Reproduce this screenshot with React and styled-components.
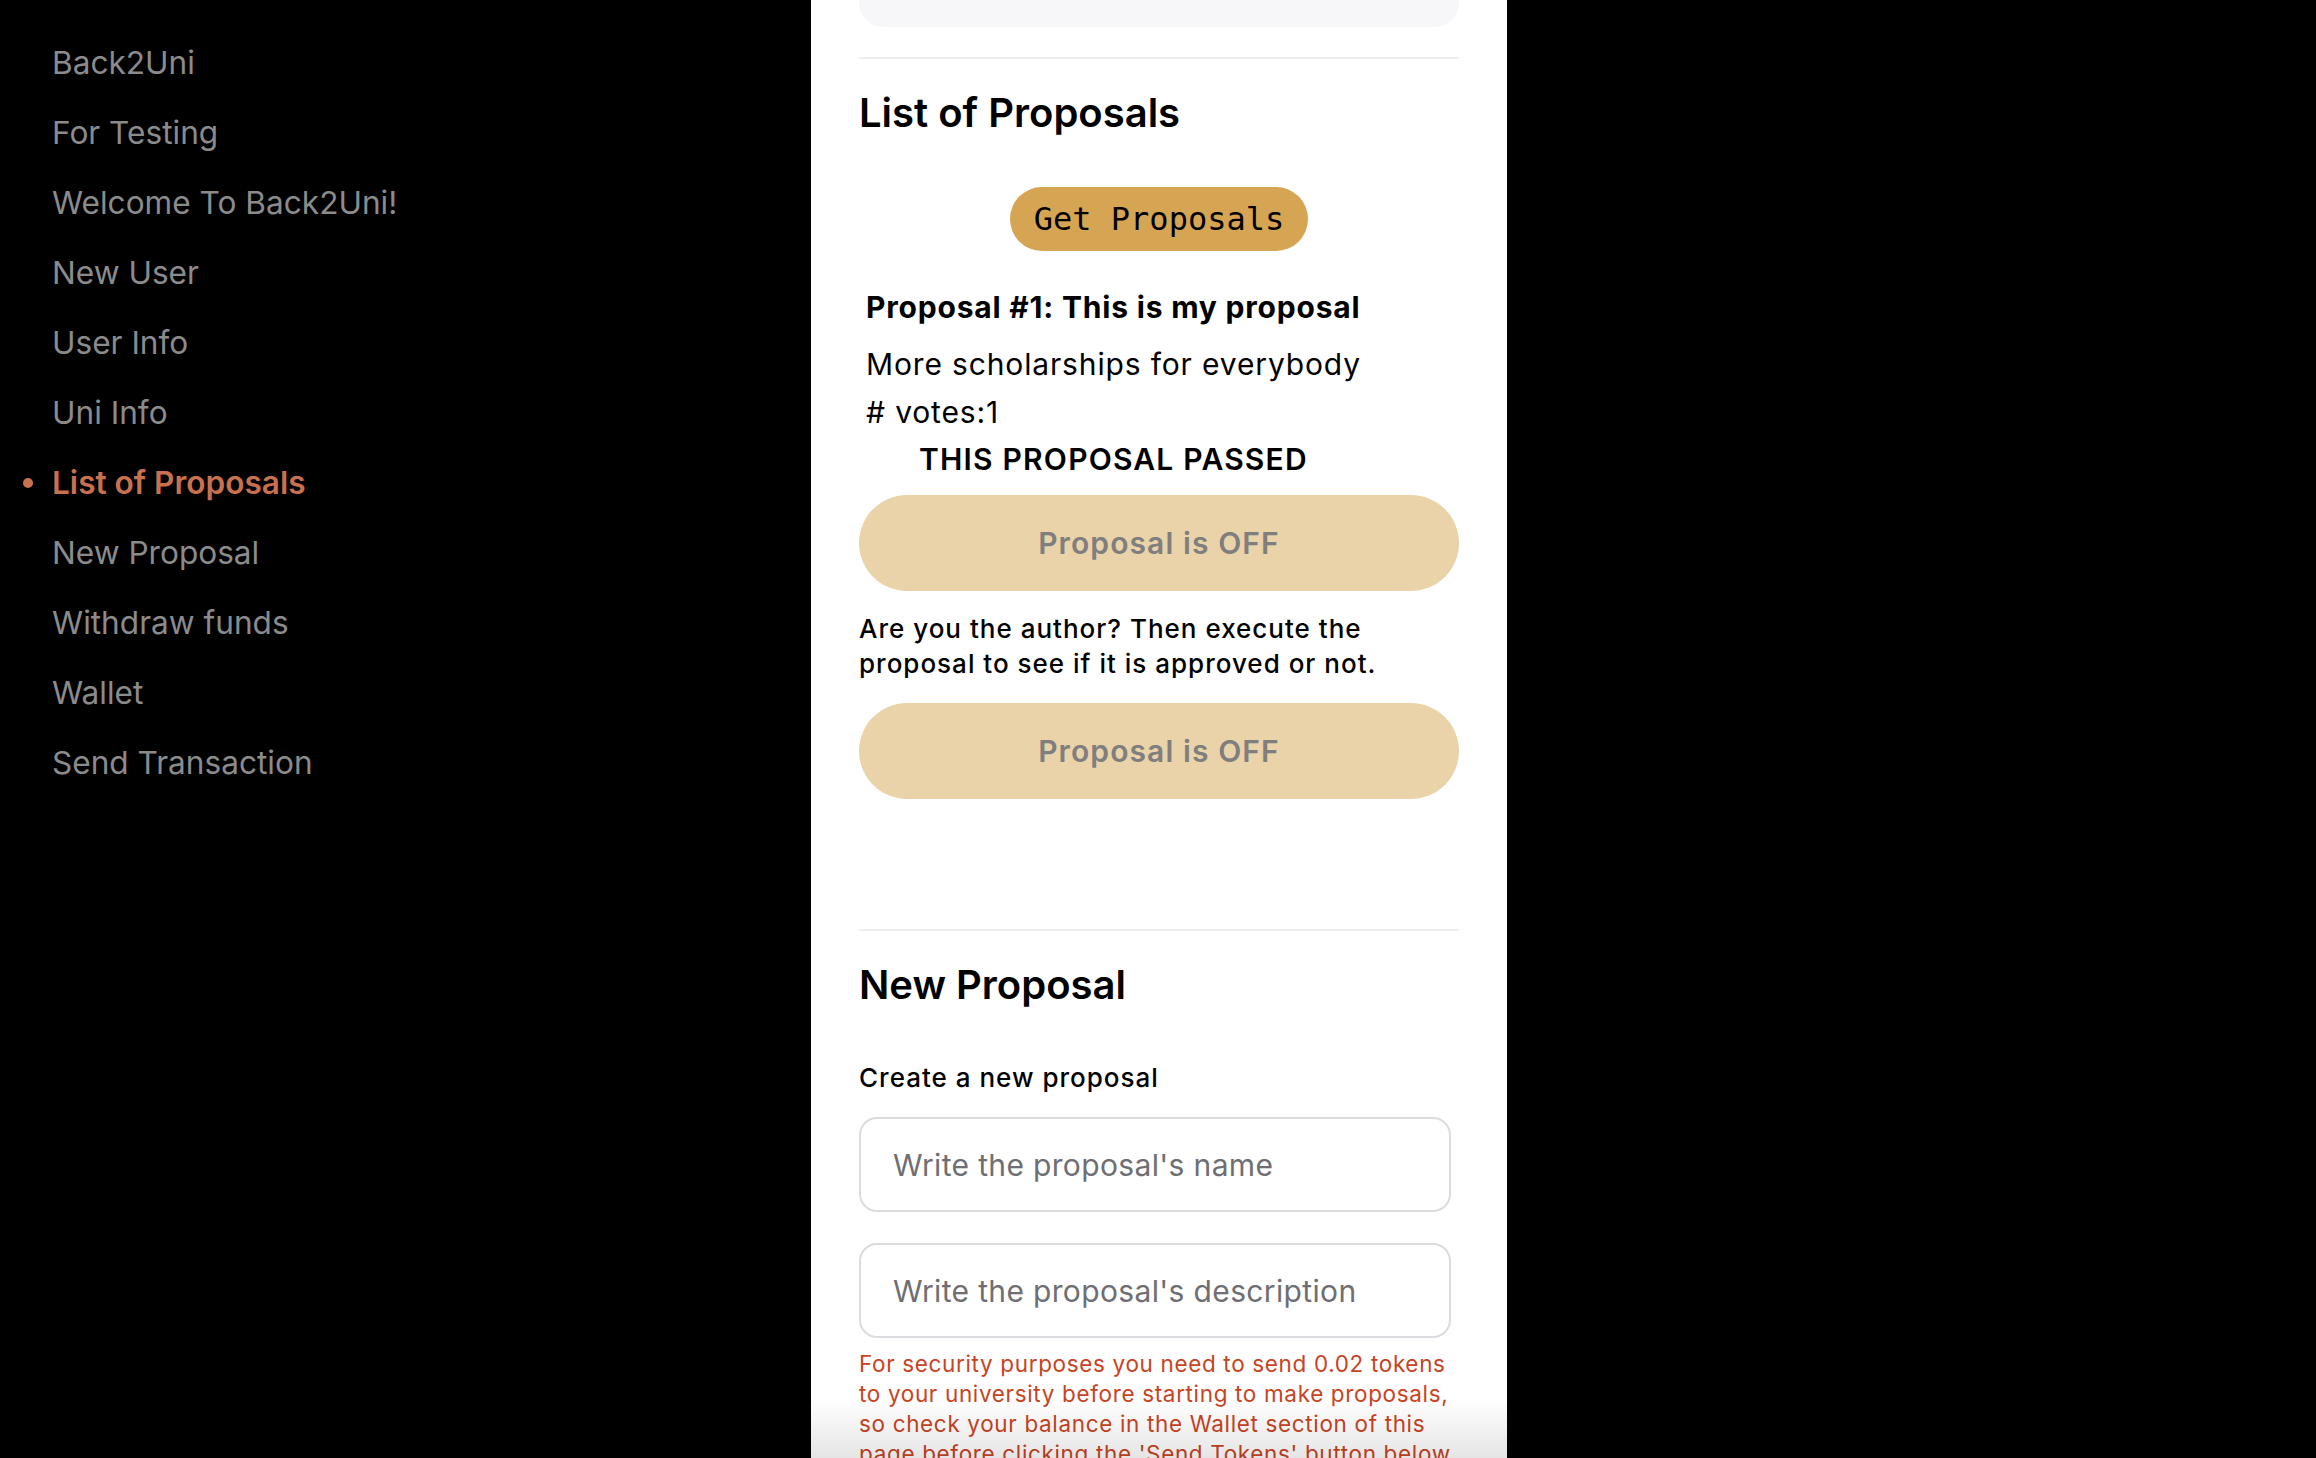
import React from "react";
import styled, { createGlobalStyle, css } from "styled-components";

const GlobalStyle = createGlobalStyle`
  html, body {
    margin: 0;
    padding: 0;
    background: #000;
  }
  * {
    box-sizing: border-box;
  }
  body {
    font-family: Inter, "Noto Sans", "Liberation Sans", sans-serif;
  }
`;

const Page = styled.div`
  display: flex;
  height: 100vh;
  overflow: hidden;
  background: #000;
`;

const Sidebar = styled.nav`
  width: 811px;
  flex-shrink: 0;
  padding-top: 28px;
  display: flex;
  flex-direction: column;
`;

const NavItem = styled.a`
  position: relative;
  display: block;
  padding-left: 52px;
  font-size: 31.6px;
  line-height: 70px;
  color: #8b8b8b;
  text-decoration: none;
  cursor: pointer;

  ${(p) =>
    p.$active &&
    css`
      color: #c9714f;
      font-weight: 600;
      //작은 점 표시
      &::before {
        content: "";
        position: absolute;
        left: 23px;
        top: 30px;
        width: 10px;
        height: 10px;
        border-radius: 50%;
        background: #c9714f;
      }
    `}
`;

const Panel = styled.main`
  position: relative;
  width: 696px;
  flex-shrink: 0;
  background: #fff;
  padding: 0 48px;
  overflow: hidden;

  // 하단 그림자 (스크롤 페이드)
  &::after {
    content: "";
    position: absolute;
    left: 0;
    right: 0;
    bottom: 0;
    height: 60px;
    background: linear-gradient(to bottom, rgba(0, 0, 0, 0), rgba(0, 0, 0, 0.1));
    pointer-events: none;
  }
`;

const ScrolledCard = styled.div`
  height: 27px;
  background: #f7f7f9;
  border-radius: 0 0 24px 24px;
`;

const Divider = styled.hr`
  margin: ${(p) => p.$gap || 30}px 0 0;
  border: none;
  height: 2px;
  background: #eeeef1;
`;

const SectionTitle = styled.h2`
  margin: 30px 0 0;
  font-size: 40px;
  font-weight: 600;
  line-height: 48px;
  color: #000;
`;

const GetButton = styled.button`
  display: block;
  margin: 50px auto 0;
  height: 64px;
  padding: 0 24px;
  border: none;
  border-radius: 32px;
  background: #d6a553;
  color: #000;
  font-family: "DejaVu Sans Mono", "Liberation Mono", monospace;
  font-size: 32px;
  cursor: pointer;
`;

const ProposalCard = styled.div`
  padding-left: 7px;
`;

const ProposalTitle = styled.div`
  margin-top: 38px;
  font-size: 30px;
  font-weight: 700;
  line-height: 36px;
  letter-spacing: 0.8px;
`;

const ProposalText = styled.div`
  margin-top: ${(p) => p.$gap || 0}px;
  font-size: 30px;
  line-height: 48px;
  letter-spacing: 0.85px;
`;

const PassedLabel = styled.div`
  margin: 5px 0 0 60px;
  font-size: 30px;
  font-weight: 600;
  line-height: 36px;
  letter-spacing: 1.2px;
`;

const OffButton = styled.button`
  display: block;
  width: 100%;
  height: 96px;
  margin-top: ${(p) => p.$gap}px;
  border: none;
  border-radius: 48px;
  background: #ebd3a9;
  color: #7f7f7f;
  font-family: inherit;
  font-size: 30px;
  font-weight: 600;
  letter-spacing: 1.1px;
`;

const Note = styled.p`
  margin: ${(p) => p.$gap}px 0 0;
  font-size: 26px;
  font-weight: 500;
  line-height: 35px;
  letter-spacing: 1px;
  color: #000;
`;

const TextInput = styled.input`
  display: block;
  width: 592px;
  height: 95px;
  margin-top: ${(p) => p.$gap}px;
  padding: 0 32px;
  border: 2px solid #dcdce0;
  border-radius: 18px;
  font-family: inherit;
  font-size: 30px;
  letter-spacing: 0.35px;
  color: #000;
  outline: none;

  &::placeholder {
    color: #6e6e73;
  }
`;

const Warning = styled.p`
  margin: 11px 0 0;
  font-size: 22.5px;
  line-height: 30px;
  letter-spacing: 0.65px;
  color: #c9431f;
`;

const navItems = [
  "Back2Uni",
  "For Testing",
  "Welcome To Back2Uni!",
  "New User",
  "User Info",
  "Uni Info",
  "List of Proposals",
  "New Proposal",
  "Withdraw funds",
  "Wallet",
  "Send Transaction",
];

export default function App() {
  return (
    <>
      <GlobalStyle />
      <Page>
        <Sidebar>
          {navItems.map((item) => (
            <NavItem key={item} $active={item === "List of Proposals"}>
              {item}
            </NavItem>
          ))}
        </Sidebar>

        <Panel>
          <ScrolledCard />
          <Divider />

          <SectionTitle>List of Proposals</SectionTitle>
          <GetButton>Get Proposals</GetButton>

          <ProposalCard>
            <ProposalTitle>Proposal #1: This is my proposal</ProposalTitle>
            <ProposalText $gap={15}>More scholarships for everybody</ProposalText>
            <ProposalText># votes:1</ProposalText>
          </ProposalCard>
          <PassedLabel>THIS PROPOSAL PASSED</PassedLabel>
          <OffButton $gap={18} disabled>
            Proposal is OFF
          </OffButton>
          <Note $gap={20}>
            Are you the author? Then execute the proposal to see if it is approved or not.
          </Note>
          <OffButton $gap={22} disabled>
            Proposal is OFF
          </OffButton>

          <Divider $gap={130} />
          <SectionTitle>New Proposal</SectionTitle>
          <Note $gap={51}>Create a new proposal</Note>
          <TextInput $gap={22} placeholder="Write the proposal's name" />
          <TextInput $gap={31} placeholder="Write the proposal's description" />
          <Warning>
            For security purposes you need to send 0.02 tokens to your university before
            starting to make proposals, so check your balance in the Wallet section of this
            page before clicking the 'Send Tokens' button below.
          </Warning>
        </Panel>
      </Page>
    </>
  );
}
